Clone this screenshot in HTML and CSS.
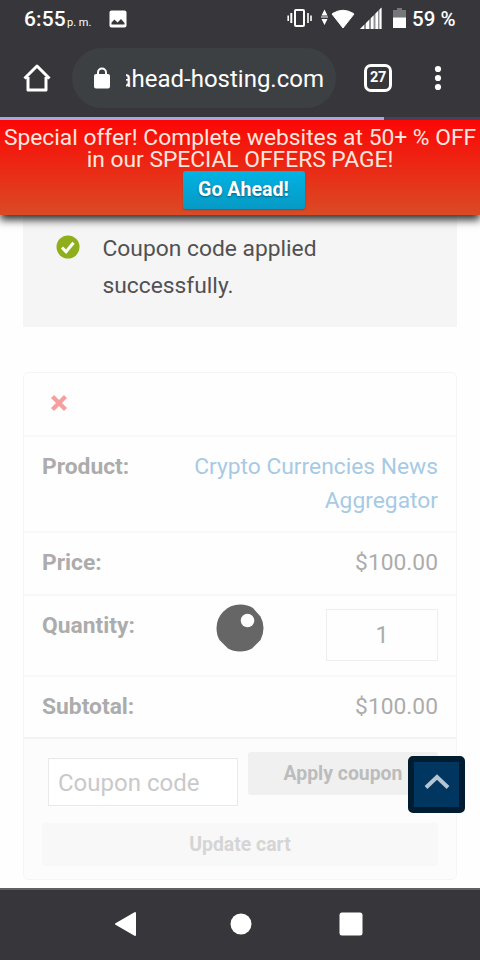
FILE: index.html
```html
<!DOCTYPE html>
<html lang="en">
<head>
<meta charset="utf-8">
<title>Cart</title>
<link rel="stylesheet" href="styles.css">
</head>
<body>
<div class="phone">
  <header class="browser">
    <div class="status">
      <span class="clock">6:55</span><span class="ampm">p. m.</span>
      <svg class="photo" width="18" height="18" viewBox="0 0 18 18"><rect x=".5" y=".5" width="17" height="17" rx="2" fill="#fff"/><path d="M2.500 14.500v-2l3-3 3 3 3.500-3.500 3.500 4v1.500z" fill="#37373b"/></svg>
      <svg class="signals" width="120" height="24" viewBox="0 0 120 24">
        <g fill="none" stroke="#fff"><rect x="8" y="4" width="9" height="16" rx="1" stroke-width="2"/><path d="M1.200 9.500v5.500M21 7v10M24 9.500v5.500" stroke-width="1.600"/><path d="M4.300 7v10" stroke-width="2"/></g>
        <path d="M34.500 9.500l3-6 3 6zM34.500 13l3 6 3-6zM34 10.500h7v1h-7z" fill="#fff"/>
        <path d="M45 8q11-7.500 22 0L56 22z" fill="#fff" stroke="#fff" stroke-linejoin="round"/>
        <path d="M73 23L94.500 1.500V23z" fill="#929294"/>
        <path d="M73 23l4-4v4zM79 23v-6l3-3v9zM84 23V12l2.500-2.500V23zM88.500 23V7.500L91 5v18zM92.500 23V3.500l2-2V23z" fill="#fff"/>
        <path d="M106 4h4V2h5v2h4v8h-13z" fill="#77777b"/><path d="M106 11.500h13V22h-13z" fill="#fff"/>
      </svg>
      <span class="battery">59 %</span>
    </div>
    <div class="toolbar">
      <svg class="home" width="28" height="28" viewBox="0 0 28 28"><path d="M1.500 14.500L14 2l12.500 12.500M5 13v13h18V13" fill="none" stroke="#fff" stroke-width="3" stroke-linejoin="round"/></svg>
      <div class="address">
        <svg width="16" height="22" viewBox="0 0 16 22"><rect y="7" width="16" height="14.500" rx="2" fill="#fff"/><path d="M4 8V5.500a4 4 0 0 1 8 0V8" fill="none" stroke="#fff" stroke-width="2"/></svg>
        <div class="host"><span>ahead-hosting.com</span></div>
      </div>
      <div class="tabs">27</div>
      <svg class="more" width="8" height="26" viewBox="0 0 8 26"><g fill="#fff"><circle cx="4" cy="4" r="3.100"/><circle cx="4" cy="13" r="3.100"/><circle cx="4" cy="22" r="3.100"/></g></svg>
    </div>
    <div class="progress"><div class="loaded"></div></div>
  </header>
  <section class="offer">
    <p>Special offer! Complete websites at 50+ % OFF</p>
    <p>in our SPECIAL OFFERS PAGE!</p>
    <a class="go">Go Ahead!</a>
  </section>
  <main>
    <div class="notice">
      <svg width="24" height="24" viewBox="0 0 24 24"><circle cx="12" cy="12" r="11.500" fill="#8fae1b"/><path d="M6 12.500l4 4.200 7.500-9" fill="none" stroke="#fff" stroke-width="3"/></svg>
      <p>Coupon code applied<br>successfully.</p>
    </div>
    <div class="cart">
      <div class="row remove"><svg width="18" height="18" viewBox="0 0 18 18"><path d="M2.500 2.500l13 13M15.500 2.500l-13 13" stroke="#f5a09e" stroke-width="4.300"/></svg></div>
      <div class="row product"><b>Product:</b><a>Crypto Currencies News<br>Aggregator</a></div>
      <div class="row price"><b>Price:</b><span>$100.00</span></div>
      <div class="row quantity"><b>Quantity:</b><div class="qty">1</div>
        <svg class="spinner" width="48" height="48" viewBox="0 0 48 48"><path d="M24 .5Q32 .5 37 4l7.500 8.500Q47.500 18 47.500 24T44.500 36L36 44.500Q31 47.500 24 47.500T12 44.500L3.500 36Q.5 31 .5 24A23.500 23.500 0 0 1 24 .5z" fill="#666"/><circle cx="31.500" cy="16.500" r="6.800" fill="#fff"/></svg>
      </div>
      <div class="row subtotal"><b>Subtotal:</b><span>$100.00</span></div>
      <div class="actions">
        <div class="coupon"><div class="field">Coupon code</div><div class="apply">Apply coupon</div></div>
        <div class="update">Update cart</div>
      </div>
    </div>
    <div class="totop"><svg width="28" height="18" viewBox="0 0 28 18"><path d="M3 14.500L14 4l11 10.500" fill="none" stroke="#b4c5d4" stroke-width="4"/></svg></div>
  </main>
  <footer class="nav">
    <svg width="24" height="26" viewBox="0 0 24 26"><path d="M2 13L21 2v22z" fill="#fff" stroke="#fff" stroke-width="2" stroke-linejoin="round"/></svg>
    <svg class="circle" width="22" height="22" viewBox="0 0 22 22"><circle cx="11" cy="11" r="10.500" fill="#fff"/></svg>
    <svg width="24" height="24" viewBox="0 0 24 24"><rect x=".5" y=".5" width="23" height="23" rx="2.500" fill="#fff"/></svg>
  </footer>
</div>
</body>
</html>
```
FILE: styles.css
```css
* { box-sizing: border-box; }
body { margin: 0; background: #fefefe; font-family: Roboto, sans-serif; font-size: 22.8px; }
p { margin: 0; }
svg { display: block; flex: none; }
.phone { width: 480px; height: 960px; display: flex; flex-direction: column; overflow: hidden; }
.browser { height: 120px; flex: none; background: #37373b; color: #fff; position: relative; z-index: 3; }
.status { height: 38px; display: flex; align-items: center; padding-left: 24px; white-space: nowrap; }
.clock { font-size: 21px; font-weight: 500; width: 43px; letter-spacing: .1px; }
.ampm { font-size: 11px; width: 42px; padding-top: 7px; }
.photo { margin-top: -1px; }
.signals { margin: -3px 0 0 160px; }
.battery { font-size: 20.5px; font-weight: 500; margin-left: 5px; }
.toolbar { height: 79px; display: flex; align-items: center; padding-left: 23px; }
.home { margin-top: 1px; }
.address { width: 264px; height: 60px; margin: 1px 28px 0 21px; border-radius: 30px; background: #3d4043; display: flex; align-items: center; padding-left: 22px; }
.host { width: 201px; margin-left: 16px; padding-top: 2px; overflow: hidden; font-size: 24px; display: flex; justify-content: flex-end; white-space: nowrap; }
.host span { flex: none; margin-right: 3px; }
.tabs { width: 28px; height: 28px; border: 3px solid #fff; border-radius: 7px; font-size: 14.5px; letter-spacing: -.3px; font-weight: 700; line-height: 22px; text-align: center; margin-top: 1px; }
.more { margin: 1px 0 0 42px; }
.progress { height: 3px; background: #42425a; }
.loaded { width: 384px; height: 3px; background: #a2a8e2; }
.offer { height: 95px; flex: none; background: linear-gradient(#fb0705, #da4b25); color: #ffe6de; position: relative; z-index: 2; box-shadow: 0 5px 8px 0 #333; display: flex; flex-direction: column; align-items: center; padding-top: 7px; white-space: nowrap; }
.offer p { line-height: 22px; }
.go { width: 122px; height: 38px; margin-left: 7px; background: linear-gradient(#00b3e4, #0799c5); border-radius: 3px; color: #fff; font-size: 19.6px; font-weight: 700; line-height: 37px; text-align: center; box-shadow: 0 1px 2px #7a4a40; text-shadow: 0 1px 2px #075d79; }
main { flex: 1; min-height: 0; position: relative; padding: 0 23px; }
.notice { height: 112px; background: #f5f5f5; color: #515151; display: flex; padding: 15px 0 0 33px; }
.notice svg { margin-top: 5px; }
.notice p { margin-left: 22.500px; line-height: 37px; }
.cart { height: 508px; margin-top: 45px; border: 1px solid #f5f5f5; border-radius: 6px; color: #acacac; overflow: hidden; }
.row { display: flex; justify-content: space-between; padding: 13px 18px 0; border-bottom: 2px solid #f8f8f8; line-height: 34px; white-space: nowrap; }
.row b { font-weight: 700; }
.row a { text-align: right; color: #a7cae4; }
.remove { height: 64px; padding: 21px 26px 0; }
.product { height: 96px; }
.price { height: 63px; }
.quantity { height: 81px; position: relative; }
.qty { width: 112px; height: 52px; border: 1px solid #eee; text-align: center; line-height: 51px; font-size: 23.5px; }
.spinner { position: absolute; left: 192px; top: 8px; }
.subtotal { height: 62px; border-color: #f3f3f3; }
.actions { height: 142px; background: #fcfcfc; padding: 13px 18px 0; font-weight: 700; font-size: 19.4px; color: #bcbcbc; white-space: nowrap; }
.coupon { display: flex; height: 71px; padding-left: 6px; }
.field { width: 190px; height: 48px; margin: 6px 10px 0 0; border: 1px solid #e9e9e9; background: #fff; font-size: 24px; font-weight: 400; line-height: 48px; padding-left: 9px; color: #c9c9c9; }
.apply { flex: 1; height: 43px; border-radius: 3px; background: #f0f0f0; text-align: center; line-height: 43px; }
.update { height: 43px; border-radius: 4px; background: #f8f8f8; color: #d5d5d5; text-align: center; line-height: 43px; }
.totop { position: absolute; right: 15px; top: 541px; width: 57px; height: 57px; border: 6px solid #001c30; border-radius: 5px; background: #00365f; display: flex; justify-content: center; padding-top: 11px; }
.nav { height: 72px; flex: none; border-top: 2px solid #606064; background: #37373b; display: flex; align-items: center; justify-content: space-between; padding: 0 117px 2px 114px; position: relative; z-index: 3; }
.circle { margin-left: 4px; }
```
